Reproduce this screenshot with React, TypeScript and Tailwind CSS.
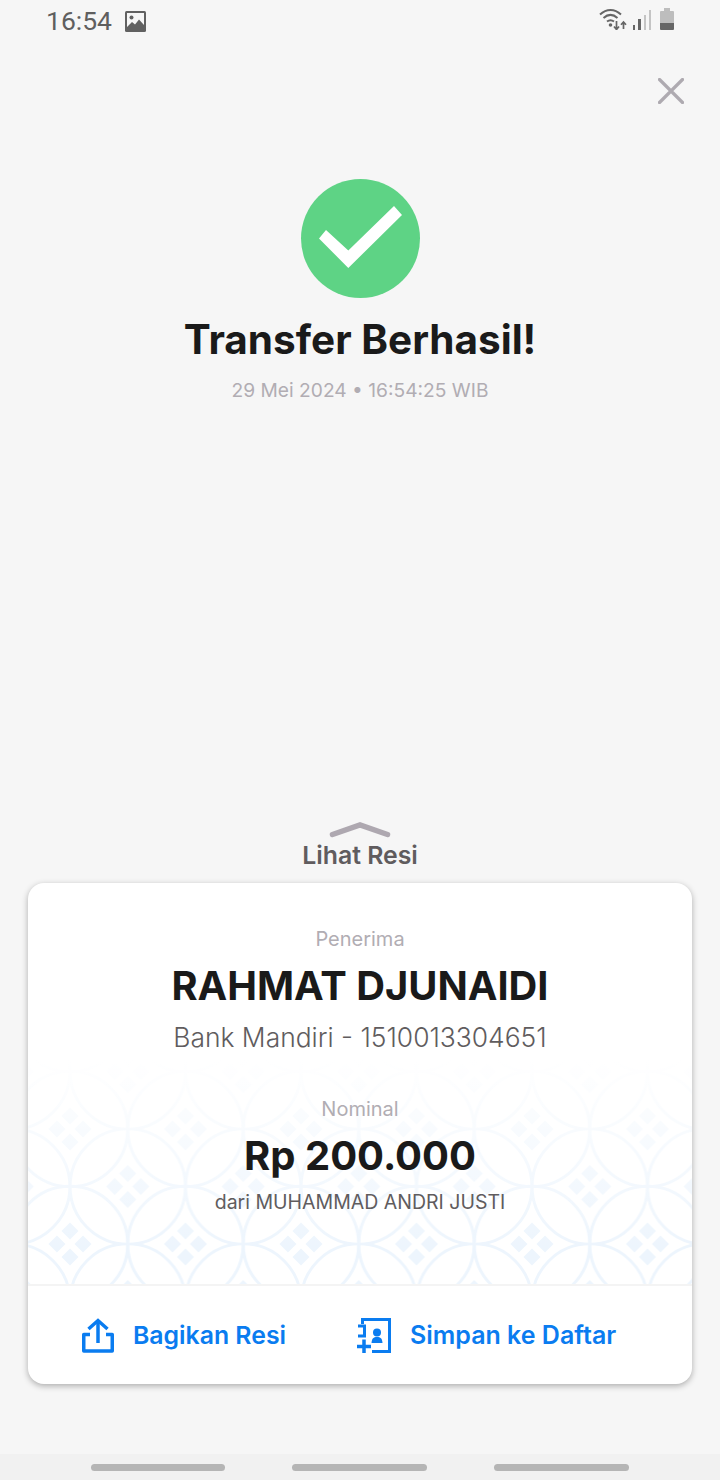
import React from "react";

const sans = "font-['Inter',sans-serif]";

const Kawung: React.FC = () => (
  <svg className="absolute inset-0 w-full h-full" aria-hidden="true">
    <defs>
      <g id="motif">
        <circle cx="0" cy="0" r="57.7" fill="none" stroke="#edf5fd" strokeWidth="3" />
        <path d="M0 -21.500 L8.500 -13 L0 -4.500 L-8.500 -13Z M0 21.500 L8.500 13 L0 4.500 L-8.500 13Z M-21.500 0 L-13 8.500 L-4.500 0 L-13 -8.500Z M21.500 0 L13 8.500 L4.500 0 L13 -8.500Z" fill="#edf5fd" />
      </g>
      <pattern id="kawung" patternUnits="userSpaceOnUse" x="42" y="-46" width="115.5" height="115">
        <use href="#motif" x="0" y="0" />
        <use href="#motif" x="115.5" y="0" />
        <use href="#motif" x="0" y="115" />
        <use href="#motif" x="115.5" y="115" />
        <use href="#motif" x="57.75" y="57.5" />
      </pattern>
    </defs>
    <rect width="100%" height="100%" fill="url(#kawung)" />
  </svg>
);

const WifiIcon = () => (
  <svg width="28" height="22" viewBox="0 0 28 22" fill="none" stroke="#666">
    <path d="M1 6.500 C7.500 0.500 15.500 0.500 22 6.500" strokeWidth="2" />
    <path d="M4.500 10 C9 6 14 6 18.500 10" strokeWidth="2" />
    <path d="M8 13.500 C10 12 13 12 15 13.500" strokeWidth="2" />
    <circle cx="11.500" cy="17" r="1.800" fill="#666" stroke="none" />
    <path d="M17.500 13 V21 M15 18.500 L17.500 21.500 L20 18.500" strokeWidth="1.700" />
    <path d="M24.500 21 V14.500 M22 16.800 L24.500 14 L27 16.800" strokeWidth="1.700" />
  </svg>
);

const SignalIcon = () => (
  <div className="flex items-end gap-[3px] h-[20px]">
    <div className="w-[2px] h-[5px] bg-[#666]" />
    <div className="w-[3px] h-[11px] bg-[#666]" />
    <div className="w-[2px] h-[15px] bg-[#c4c4c4]" />
    <div className="w-[2px] h-[20px] bg-[#c4c4c4]" />
  </div>
);

const BatteryIcon = () => (
  <div className="flex flex-col items-center w-[14px] ml-[3px]">
    <div className="w-[6px] h-[3px] bg-[#bdbdbd]" />
    <div className="w-[14px] h-[12px] bg-[#bdbdbd] rounded-t-[1px]" />
    <div className="w-[14px] h-[7px] bg-[#666] rounded-b-[1px]" />
  </div>
);

const ShareIcon = () => (
  <svg width="32" height="35" viewBox="0 0 32 35" fill="none" stroke="#0a7cf0" strokeWidth="3.500">
    <path d="M8 16.500 H1.750 V33 H30.250 V16.500 H24" strokeLinejoin="round" />
    <path d="M16 25 V3" />
    <path d="M6.500 11 L16 2.500 L25.500 11" />
  </svg>
);

const ContactIcon = () => (
  <svg width="34" height="35" viewBox="0 0 34 35" fill="none">
    <path d="M5.500 6 V1.500 H32.500 V33.500 H15" stroke="#0a7cf0" strokeWidth="3" />
    <path d="M1 8 H7.500 V18 H1" stroke="#0a7cf0" strokeWidth="3" />
    <path d="M0 28.500 H14 M7 21.500 V35" stroke="#0a7cf0" strokeWidth="3.500" />
    <circle cx="20" cy="14.500" r="4" fill="#0a7cf0" />
    <path d="M14.500 25 C14.800 20.500 16.500 19 20 19 C23.500 19 25.200 20.500 25.500 25Z" fill="#0a7cf0" />
  </svg>
);

const App: React.FC = () => {
  return (
    <div className={`w-[720px] h-[1480px] flex flex-col bg-[#f6f6f6] overflow-hidden ${sans}`}>
      {/* Status bar */}
      <div className="flex items-center justify-between h-[42px] pl-[46px] pr-[46px]">
        <div className="flex items-center gap-[13px]">
          <span className="font-['Roboto',sans-serif] text-[26.500px] leading-[42px] text-[#5f5f5f]">16:54</span>
          <svg width="21" height="21" viewBox="0 0 21 21">
            <rect width="21" height="21" rx="1.500" fill="#616161" />
            <rect x="2" y="2" width="17" height="17" fill="#f6f6f6" />
            <circle cx="6.500" cy="6.500" r="2" fill="#616161" />
            <path d="M2 16 L7 11 L10 13.500 L14 8.500 L19 14 V19 H2Z" fill="#616161" />
          </svg>
        </div>
        <div className="flex items-end gap-[6px] h-[22px] mt-[-4px]">
          <WifiIcon />
          <SignalIcon />
          <BatteryIcon />
        </div>
      </div>

      {/* Close */}
      <div className="flex justify-end pr-[36px] pt-[36px]">
        <svg width="26" height="26" viewBox="0 0 26 26" stroke="#aeaab0" strokeWidth="3.200" strokeLinecap="round">
          <path d="M1.500 1.500 L24.500 24.500 M24.500 1.500 L1.500 24.500" />
        </svg>
      </div>

      {/* Result */}
      <div className="flex flex-col items-center pt-[75px]">
        <svg width="119" height="119" viewBox="0 0 119 119">
          <circle cx="59.500" cy="59.500" r="59.500" fill="#5ed385" />
          <path d="M18 59.500 L25 51 L47.300 71.500 L93 27 L101 36 L47.300 89Z" fill="#ffffff" />
        </svg>
        <h1 className="mt-[18px] text-[40.500px] leading-[48px] font-bold text-[#1a1a1a]">Transfer Berhasil!</h1>
        <p className="mt-[13px] text-[19.200px] leading-[26px] text-[#b1adb3]">29 Mei 2024 • 16:54:25 WIB</p>
      </div>

      {/* Handle */}
      <div className="flex-1" />
      <div className="flex flex-col items-center">
        <svg width="62" height="18" viewBox="0 0 62 18" fill="none" stroke="#aea8b0" strokeWidth="5.500" strokeLinecap="round">
          <path d="M3.500 12.500 L31 3 L58.500 12.500" />
        </svg>
        <span className="text-[24.800px] leading-[30px] font-semibold text-[#605c5e]">Lihat Resi</span>
      </div>

      {/* Card */}
      <div className="mx-[28px] mt-[13px] h-[501px] flex flex-col bg-white rounded-[16px] shadow-[0_2px_6px_rgba(0,0,0,0.3)] overflow-hidden">
        <div className="relative h-[403px] border-b-2 border-[#f4f4f4]">
          <div className="absolute inset-x-0 bottom-0 h-[224px]">
            <Kawung />
            <div className="absolute inset-x-0 top-0 h-[190px] bg-gradient-to-b from-white to-white/0" />
          </div>
          <div className="relative flex flex-col items-center pt-[44px]">
            <p className="text-[20px] leading-[24px] text-[#b1adb3]">Penerima</p>
            <p className="mt-[11px] text-[39.800px] leading-[48px] font-bold text-[#1a1a1a]">RAHMAT DJUNAIDI</p>
            <p className="mt-[10px] text-[26.400px] leading-[34px] font-light text-[#605c5e]">Bank Mandiri - 1510013304651</p>
            <p className="mt-[43px] text-[20px] leading-[24px] text-[#b1adb3]">Nominal</p>
            <p className="mt-[11px] text-[40px] leading-[48px] font-bold text-[#1a1a1a]">Rp 200.000</p>
            <p className="mt-[9px] text-[19.500px] leading-[26px] text-[#605c5e]">dari MUHAMMAD ANDRI JUSTI</p>
          </div>
        </div>
        <div className="flex-1 flex items-center pl-[54px]">
          <div className="flex items-center gap-[19px] w-[275px]">
            <ShareIcon />
            <span className="mt-[2px] text-[24.800px] font-semibold text-[#0a7cf0]">Bagikan Resi</span>
          </div>
          <div className="flex items-center gap-[19px]">
            <ContactIcon />
            <span className="mt-[2px] text-[25px] font-semibold text-[#0a7cf0]">Simpan ke Daftar</span>
          </div>
        </div>
      </div>

      {/* Nav bar */}
      <div className="mt-[70px] h-[26px] bg-[#f1f1f1] flex items-center pl-[91px] gap-[67px]">
        <div className="w-[134px] h-[7px] rounded-full bg-[#b5b5b5]" />
        <div className="w-[135px] h-[7px] rounded-full bg-[#b5b5b5]" />
        <div className="w-[135px] h-[7px] rounded-full bg-[#b5b5b5]" />
      </div>
    </div>
  );
};

export default App;
